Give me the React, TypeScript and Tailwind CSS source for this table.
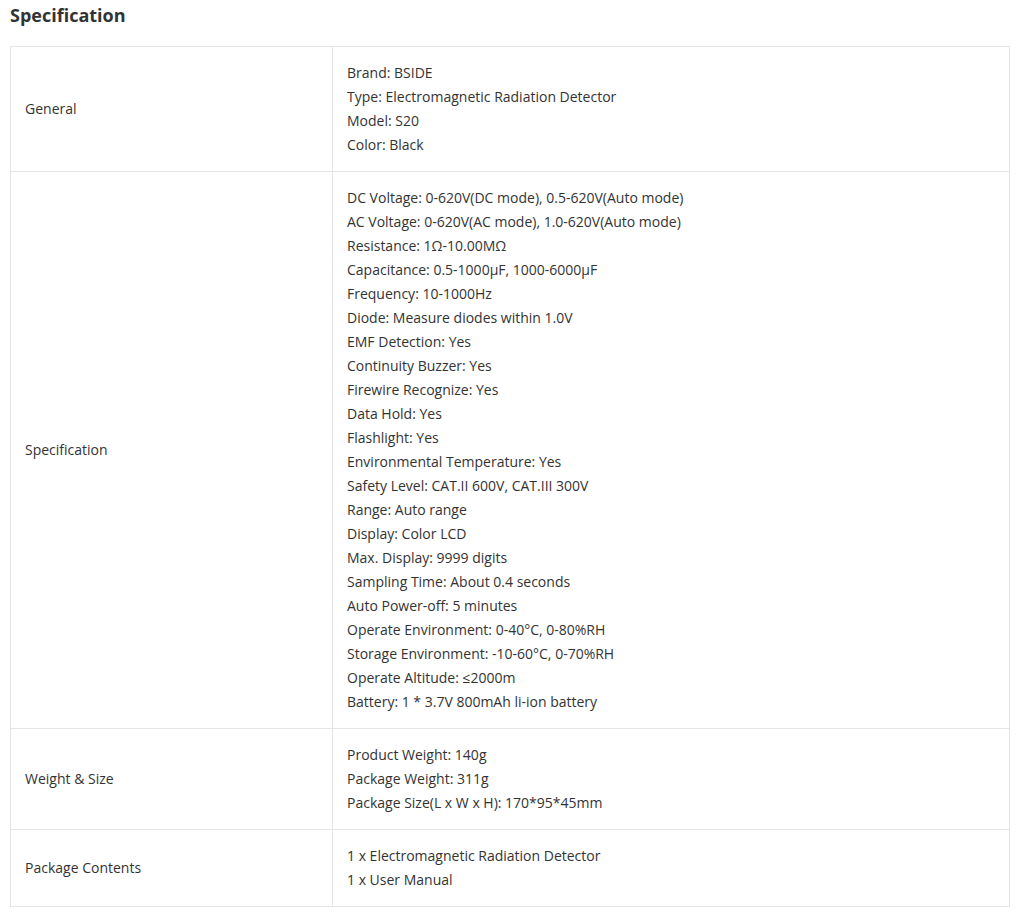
import React from "react";

const rows: { label: string; items: string[] }[] = [
  {
    label: "General",
    items: ["Brand: BSIDE", "Type: Electromagnetic Radiation Detector", "Model: S20", "Color: Black"],
  },
  {
    label: "Specification",
    items: [
      "DC Voltage: 0-620V(DC mode), 0.5-620V(Auto mode)",
      "AC Voltage: 0-620V(AC mode), 1.0-620V(Auto mode)",
      "Resistance: 1Ω-10.00MΩ",
      "Capacitance: 0.5-1000μF, 1000-6000μF",
      "Frequency: 10-1000Hz",
      "Diode: Measure diodes within 1.0V",
      "EMF Detection: Yes",
      "Continuity Buzzer: Yes",
      "Firewire Recognize: Yes",
      "Data Hold: Yes",
      "Flashlight: Yes",
      "Environmental Temperature: Yes",
      "Safety Level: CAT.II 600V, CAT.III 300V",
      "Range: Auto range",
      "Display: Color LCD",
      "Max. Display: 9999 digits",
      "Sampling Time: About 0.4 seconds",
      "Auto Power-off: 5 minutes",
      "Operate Environment: 0-40°C, 0-80%RH",
      "Storage Environment: -10-60°C, 0-70%RH",
      "Operate Altitude: ≤2000m",
      "Battery: 1 * 3.7V 800mAh li-ion battery",
    ],
  },
  {
    label: "Weight & Size",
    items: ["Product Weight: 140g", "Package Weight: 311g", "Package Size(L x W x H): 170*95*45mm"],
  },
  {
    label: "Package Contents",
    items: ["1 x Electromagnetic Radiation Detector", "1 x User Manual"],
  },
];

export default function App() {
  return (
    <div
      className="bg-white text-[#333] px-[10px] pt-[2px] pb-[6px] w-[1021px]"
      style={{ fontFamily: '"Open Sans", sans-serif' }}
    >
      <h2 className="text-[18px] font-bold leading-[26px] text-[#333] mb-[18px]">Specification</h2>
      <div className="w-[1000px] grid grid-cols-[322px_1fr] border-t border-l border-[#e5e5e5] text-[14px] leading-[24px]">
        {rows.map((r) => (
          <React.Fragment key={r.label}>
            <div className="border-r border-b border-[#e5e5e5] px-[14px] py-[14px] flex items-center">
              {r.label}
            </div>
            <div className="border-r border-b border-[#e5e5e5] px-[14px] py-[14px]">
              {r.items.map((t) => (
                <div key={t}>{t}</div>
              ))}
            </div>
          </React.Fragment>
        ))}
      </div>
    </div>
  );
}
